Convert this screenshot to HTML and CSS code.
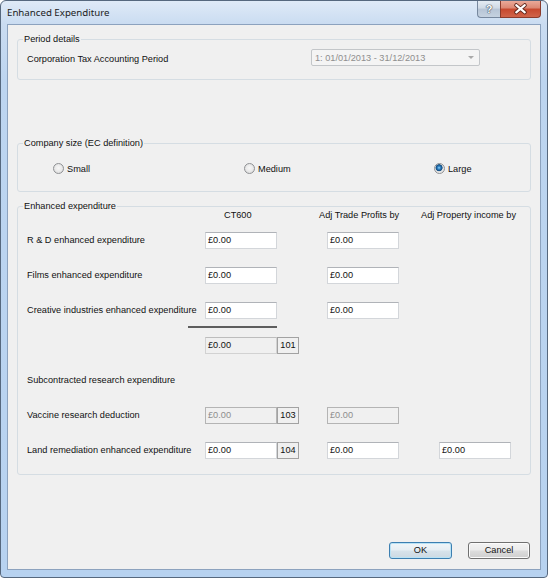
FILE: index.html
```html
<!DOCTYPE html>
<html lang="en">
<head>
<meta charset="utf-8">
<title>Enhanced Expenditure</title>
<link rel="stylesheet" href="styles.css">
</head>
<body>
<div class="window">
  <div class="titlebar">
    <span class="title">Enhanced Expenditure</span>
    <div class="caption-btns">
      <span class="cbtn help">?</span>
      <span class="cbtn close">
        <svg width="41" height="16" viewBox="0 0 41 16" aria-hidden="true">
          <path d="M16 4 L25 11.5 M25 4 L16 11.5" stroke="#5a2218" stroke-width="4.2" stroke-linecap="round" fill="none"/>
          <path d="M16 4 L25 11.5 M25 4 L16 11.5" stroke="#ffffff" stroke-width="2.3" stroke-linecap="round" fill="none"/>
        </svg>
      </span>
    </div>
  </div>
  <div class="client">
    <fieldset class="group g-period">
      <legend>Period details</legend>
      <div class="period-row">
        <span>Corporation Tax Accounting Period</span>
        <div class="combo"><span>1: 01/01/2013 - 31/12/2013</span><span class="arrow"></span></div>
      </div>
    </fieldset>

    <fieldset class="group g-size">
      <legend>Company size (EC definition)</legend>
      <div class="radios">
        <div class="radio-item"><span class="radio"></span><span>Small</span></div>
        <div class="radio-item"><span class="radio"></span><span>Medium</span></div>
        <div class="radio-item"><span class="radio checked"></span><span>Large</span></div>
      </div>
    </fieldset>

    <fieldset class="group g-exp">
      <legend>Enhanced expenditure</legend>
      <div class="exp-body">
        <div class="headers">
          <span class="h-ct">CT600</span>
          <span class="h-adj">Adj Trade Profits by</span>
          <span class="h-prop">Adj Property income by</span>
        </div>
        <div class="exp-rows">
          <div class="row">
            <span class="c-label">R &amp; D enhanced expenditure</span>
            <span class="tb c-ct">£0.00</span>
            <span class="tb c-adj">£0.00</span>
          </div>
          <div class="row">
            <span class="c-label">Films enhanced expenditure</span>
            <span class="tb c-ct">£0.00</span>
            <span class="tb c-adj">£0.00</span>
          </div>
          <div class="row">
            <span class="c-label">Creative industries enhanced expenditure</span>
            <div class="c-ct sum-cell">
              <span class="tb">£0.00</span>
              <span class="sum-line"></span>
            </div>
            <span class="tb c-adj">£0.00</span>
          </div>
          <div class="row">
            <span class="tb readonly c-ct">£0.00</span>
            <span class="code c-code">101</span>
          </div>
          <div class="row">
            <span class="c-wide">Subcontracted research expenditure</span>
          </div>
          <div class="row">
            <span class="c-label">Vaccine research deduction</span>
            <span class="tb disabled c-ct">£0.00</span>
            <span class="code c-code">103</span>
            <span class="tb disabled c-adj">£0.00</span>
          </div>
          <div class="row">
            <span class="c-label">Land remediation enhanced expenditure</span>
            <span class="tb c-ct">£0.00</span>
            <span class="code c-code">104</span>
            <span class="tb c-adj">£0.00</span>
            <span class="tb c-prop">£0.00</span>
          </div>
        </div>
      </div>
    </fieldset>

    <div class="spacer"></div>
    <div class="buttons">
      <button class="btn default" type="button">OK</button>
      <button class="btn cancel" type="button">Cancel</button>
    </div>
  </div>
</div>
</body>
</html>
```

FILE: styles.css
```css
* { box-sizing: border-box; }

html, body {
  margin: 0;
  padding: 0;
}

body {
  width: 548px;
  height: 578px;
  overflow: hidden;
  background: #ffffff;
  font-family: "Liberation Sans", Arial, sans-serif;
  font-size: 9.2px;
  color: #111111;
}

.window {
  width: 548px;
  height: 578px;
  border: 1px solid #56687e;
  border-radius: 6px 6px 4px 4px;
  background: linear-gradient(to bottom, #dfeaf7 0, #cadcf1 23px, #bdd5f0 80px, #b7d2f0 100%);
  padding: 0 6px 7px 6px;
  display: flex;
  flex-direction: column;
}

.titlebar {
  height: 23px;
  display: flex;
  justify-content: space-between;
  align-items: flex-start;
  flex-shrink: 0;
}

.title {
  font-family: "Noto Sans", "Open Sans", sans-serif;
  font-size: 9.7px;
  line-height: 24px;
  color: #1b1b1b;
}

.caption-btns {
  display: flex;
}

.cbtn {
  height: 17px;
  display: flex;
  align-items: center;
  justify-content: center;
}

.help {
  width: 23px;
  border: 1px solid #77889e;
  border-top: none;
  border-right: none;
  border-radius: 0 0 0 4px;
  background: linear-gradient(to bottom, #e4ebf3 0, #cfd9e5 45%, #b6c4d5 50%, #c5d2e0 100%);
  font-family: "Liberation Sans", Arial, sans-serif;
  font-weight: bold;
  font-size: 11px;
  color: #ffffff;
  text-shadow: 0 0 1px #3d4a5a, 0 0 1px #3d4a5a, 0 0 1px #3d4a5a;
}

.close {
  width: 41px;
  border: 1px solid #8b3b2c;
  border-top: none;
  border-radius: 0 0 4px 0;
  background: linear-gradient(to bottom, #eaa999 0, #dc8874 42%, #c7492f 52%, #d0644a 100%);
}

.client {
  flex: 1;
  background: #f0f0f0;
  border: 1px solid #8ca2be;
  display: flex;
  flex-direction: column;
}

.group {
  margin: 0 9px;
  padding: 0;
  border: 1px solid #d5dde3;
  border-radius: 3px;
  min-width: 0;
}

.group legend {
  margin-left: 5px;
  padding: 0 1px;
  font-size: 9.2px;
  line-height: 11px;
  color: #111111;
}

.g-period { margin-top: 9px; }

.period-row {
  display: flex;
  align-items: center;
  padding: 4px 50px 13px 9px;
}

.period-row > span:first-child {
  padding-top: 2px;
}

.combo {
  margin-left: auto;
  width: 169px;
  height: 17px;
  border: 1px solid #c3c6c9;
  border-radius: 2px;
  background: #f4f4f4;
  color: #8e8e8e;
  display: flex;
  align-items: center;
  justify-content: space-between;
  padding: 0 5px 0 3px;
}

.arrow {
  width: 0;
  height: 0;
  border-left: 3px solid transparent;
  border-right: 3px solid transparent;
  border-top: 3px solid #a9a9a9;
}

.g-size { margin-top: 58px; }

.radios {
  display: grid;
  grid-template-columns: 191px 190px 1fr;
  padding: 13px 0 16px 35px;
}

.radio-item {
  display: flex;
  align-items: center;
  gap: 3px;
  height: 13px;
}

.radio {
  width: 11px;
  height: 11px;
  border-radius: 50%;
  border: 1px solid #8f9194;
  background: radial-gradient(circle at 50% 45%, #f7f7f7 0, #ebebeb 45%, #d3d3d3 100%);
}

.radio.checked {
  background: radial-gradient(circle at 45% 42%, #9fdcff 0, #3a8fd0 1.2px, #15538c 2.8px, #2b5f8a 3.3px, #e4e4e4 3.8px, #eeeeee 100%);
}

.g-exp { margin-top: 9px; }

.exp-body {
  padding: 0 0 15px 9px;
}

.headers {
  display: grid;
  grid-template-columns: 197px 95px 102px auto;
  height: 20px;
  line-height: 6px;
  white-space: nowrap;
}

.h-ct { grid-column: 2; }
.h-adj { grid-column: 3; }
.h-prop { grid-column: 4; }

.exp-rows {
  display: flex;
  flex-direction: column;
  gap: 18px;
}

.row {
  display: grid;
  grid-template-columns: 178px 72px 50px 72px 40px 72px;
  height: 17px;
  line-height: 17px;
  white-space: nowrap;
}

.c-label { grid-column: 1; }
.c-wide { grid-column: 1 / span 3; }
.c-ct { grid-column: 2; }
.c-code { grid-column: 3; }
.c-adj { grid-column: 4; }
.c-prop { grid-column: 6; }

.tb {
  display: block;
  height: 17px;
  border: 1px solid #d3d6da;
  border-top-color: #b0b3b8;
  background: #ffffff;
  padding-left: 2px;
  line-height: 15px;
  color: #111111;
}

.tb.readonly {
  background: #f0f0f0;
  border-color: #d2d2d2;
  border-top-color: #bdbdbd;
}

.tb.disabled {
  background: #f0f0f0;
  border-color: #b4b4b4;
  color: #8d8d8d;
}

.sum-cell {
  display: flex;
  flex-direction: column;
  align-items: flex-end;
}

.sum-cell .tb {
  width: 72px;
}

.sum-line {
  display: block;
  width: 89px;
  height: 2px;
  margin-top: 7px;
  background: #5e5e5e;
  flex-shrink: 0;
}

.code {
  display: block;
  width: 22px;
  height: 17px;
  border: 1px solid #a2a2a2;
  background: #f0f0f0;
  text-align: center;
  line-height: 15px;
  color: #111111;
}

.spacer { flex: 1; }

.buttons {
  display: flex;
  justify-content: flex-end;
  gap: 16px;
  padding: 0 10px 10px 0;
}

.btn {
  width: 63px;
  height: 17px;
  padding: 0;
  border: 1px solid #707070;
  border-radius: 3px;
  background: linear-gradient(to bottom, #f3f3f3 0, #ebebeb 48%, #dddddd 52%, #cfcfcf 100%);
  box-shadow: inset 0 0 0 1px #fbfbfb;
  font-family: "Liberation Sans", Arial, sans-serif;
  font-size: 9.2px;
  line-height: 15px;
  color: #111111;
}

.btn.cancel { width: 62px; }

.btn.default {
  border-color: #3c7fb1;
  background: linear-gradient(to bottom, #f1f6f9 0, #e6eef3 48%, #d7e3eb 52%, #ccd9e2 100%);
  box-shadow: inset 0 0 0 1px #b9e2f5;
}
```
